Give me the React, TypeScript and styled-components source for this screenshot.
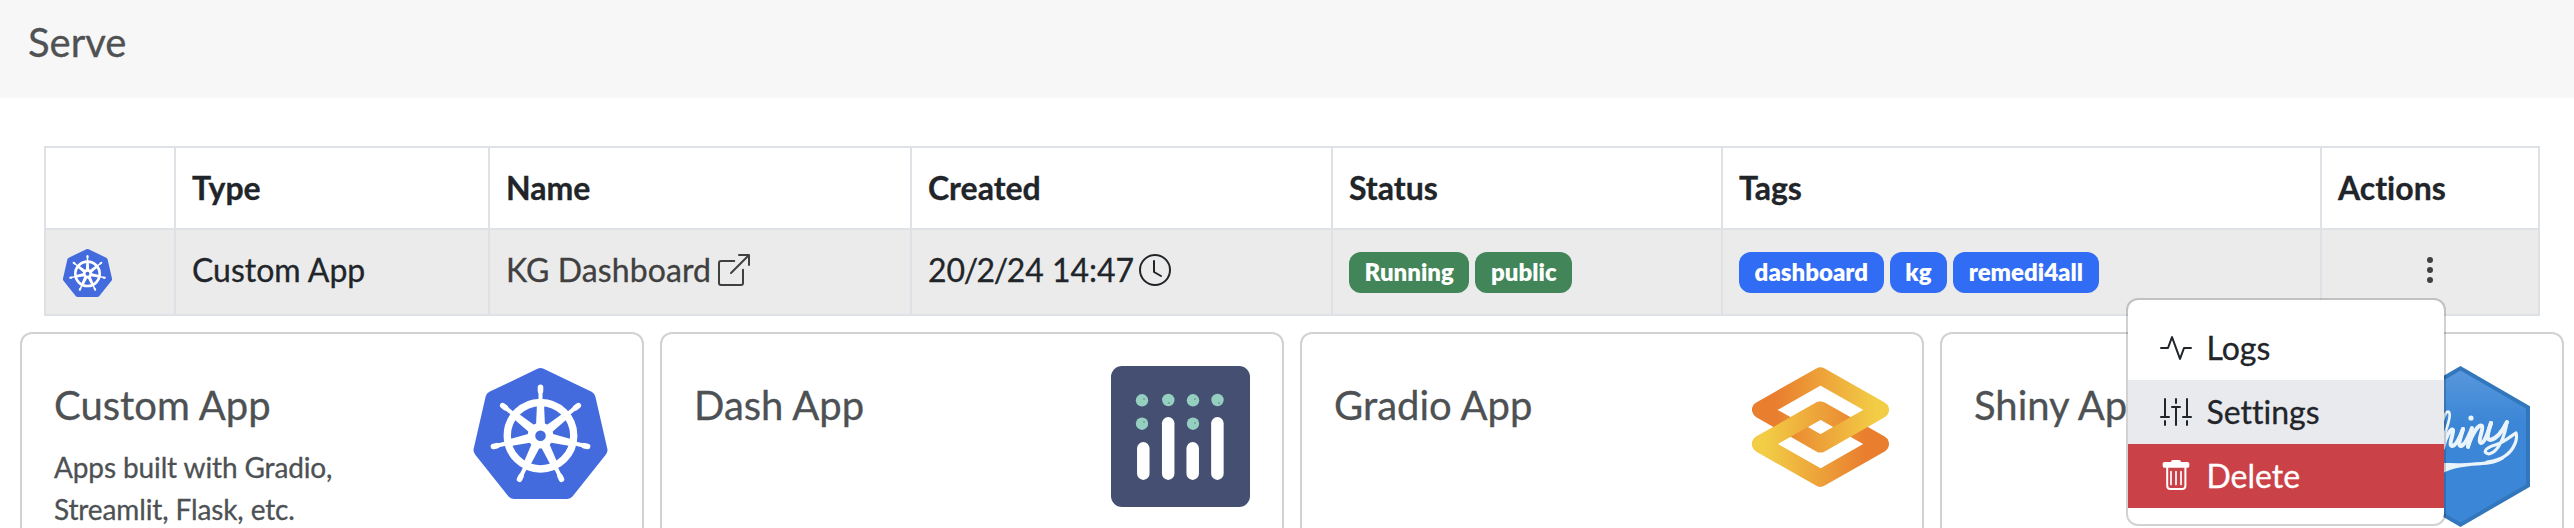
import React from 'react';
import styled, { createGlobalStyle } from 'styled-components';
import { BsBoxArrowUpRight, BsClock, BsThreeDotsVertical, BsActivity, BsSliders2Vertical } from 'react-icons/bs';

const GlobalStyle = createGlobalStyle`
  * { box-sizing: border-box; }
  html, body { height: 100%; }
  body {
    margin: 0;
    overflow: hidden;
    background: #fff;
    font-family: Lato, "Liberation Sans", sans-serif;
    font-variant-ligatures: none;
    color: #212529;
    -webkit-text-stroke: 0.3px currentColor;
  }
`;

const Page = styled.div`
  display: flex;
  flex-direction: column;
  width: 2574px;
  height: 528px;
  overflow: hidden;
`;

const Header = styled.header`
  flex: none;
  height: 98px;
  padding: 15px 28px;
  background: #f7f7f7;
`;

const PageTitle = styled.h1`
  margin: 0;
  font-size: 40px;
  line-height: 54px;
  font-weight: 400;
  color: #4f5153;
`;

const TableWrap = styled.section`
  flex: none;
  padding: 48px 34px 0 44px;
`;

const Table = styled.table`
  width: 2496px;
  border-collapse: collapse;
  table-layout: fixed;
  font-size: 32px;
  line-height: 48px;
`;

const HeadCell = styled.th`
  height: 82px;
  padding: 0 16px;
  border: 2px solid #dee2e6;
  text-align: left;
  font-weight: 700;
`;

const Cell = styled.td<{ $icon?: boolean }>`
  height: 86px;
  padding: ${p => (p.$icon ? '2px 16px 0' : '0 16px 4px')};
  border: 2px solid #dee2e6;
  background: #ebebeb;
`;

const Line = styled.div<{ $color?: string; $gap?: number }>`
  display: flex;
  align-items: center;
  gap: ${p => p.$gap ?? 6}px;
  color: ${p => p.$color || 'inherit'};
`;

const Slash = styled.span`
  margin: 0 -1.5px;
`;

const NameText = styled.span`
  letter-spacing: 0.1px;
`;

const Badge = styled.span<{ $tone: string }>`
  height: 41px;
  padding: 8.4px 15.6px;
  margin-top: 4px;
  border-radius: 12px;
  background: ${p => p.$tone};
  color: #fff;
  font-size: 24px;
  line-height: 24px;
  font-weight: 800;
  -webkit-text-stroke: 0;
`;

const MenuAnchor = styled.div`
  position: relative;
  display: flex;
  justify-content: center;
`;

const Menu = styled.div`
  position: absolute;
  top: 44px;
  right: 76px;
  z-index: 2;
  width: 320px;
  height: 228px;
  padding: 16px 0;
  border: 2px solid rgba(0, 0, 0, 0.176);
  border-radius: 12px;
  background: #fff;
  background-clip: padding-box;
`;

const MenuItem = styled.div<{ $bg?: string; $fg?: string }>`
  display: flex;
  align-items: center;
  gap: 14.5px;
  height: 64px;
  padding: 0 32px;
  background: ${p => p.$bg || 'transparent'};
  color: ${p => p.$fg || '#212529'};
`;

const Cards = styled.section`
  flex: 1;
  min-height: 0;
  display: grid;
  grid-template-columns: repeat(4, 624px);
  column-gap: 16px;
  padding: 16px 0 0 20px;
`;

const Card = styled.article`
  display: flex;
  justify-content: space-between;
  padding: 32px 32px 0;
  border: 2px solid rgba(0, 0, 0, 0.176);
  border-bottom: 0;
  border-radius: 12px 12px 0 0;
  color: #4d5154;
`;

const CardBody = styled.div`
  padding-top: 15px;
`;

const CardTitle = styled.h2`
  margin: 0 0 17px;
  font-size: 40px;
  line-height: 48px;
  font-weight: 400;
`;

const CardText = styled.p`
  width: 300px;
  margin: 0;
  font-size: 28px;
  line-height: 42px;
  letter-spacing: -0.12px;
`;

const Logo = styled.svg`
  flex: none;
  display: block;
`;

const TrashIcon = () => (
  <svg width="32" height="32" viewBox="0 0 32 32" fill="none">
    <path d="M11 2C11 .8 11.800 0 13 0h6c1.200 0 2 .8 2 2h6.500c1 0 1.800.8 1.800 1.800v2.100c0 1-.8 1.800-1.800 1.800h-23c-1 0-1.800-.8-1.800-1.800V3.800c0-1 .8-1.800 1.800-1.800z" fill="currentColor" />
    <path d="M7.200 6v19.800c0 1.900 1.300 3.200 3.200 3.200h11.800c1.900 0 3.200-1.300 3.200-3.200V6" stroke="currentColor" strokeWidth="2" />
    <path d="M11 11.700V24.500M16 11.700V24.500M21 11.700V24.500" stroke="currentColor" strokeWidth="1.700" strokeLinecap="round" />
  </svg>
);

const SPOKES = [0, 1, 2, 3, 4, 5, 6];

const point = (r: number, i: number) => {
  const a = (i * 2 * Math.PI) / 7;
  return `${(r * Math.sin(a)).toFixed(2)},${(-r * Math.cos(a)).toFixed(2)}`;
};

const KubernetesLogo = ({ width, height }: { width: number; height: number }) => (
  <Logo width={width} height={height} viewBox="-69 -70 138 134">
    <polygon points={SPOKES.map(i => point(61, i)).join(' ')} fill="#436bdd" stroke="#436bdd" strokeWidth="14" strokeLinejoin="round" />
    <g transform="translate(0 -0.8)">
      <circle r="33" fill="none" stroke="#fff" strokeWidth="7.300" />
      {SPOKES.map(i => (
        <g key={i} transform={`rotate(${(i * 360) / 7})`}>
          <path d="M-3.500-31L-4.500-9H4.500L3.500-31z" fill="#fff" />
          <path d="M0-34V-47" stroke="#fff" strokeWidth="4" strokeLinecap="round" />
          <path d="M0-44.500V-48" stroke="#fff" strokeWidth="5.500" strokeLinecap="round" />
        </g>
      ))}
      <circle r="9" fill="none" stroke="#fff" strokeWidth="7.500" />
    </g>
  </Logo>
);

const DashLogo = () => (
  <Logo width="139" height="141" viewBox="0 0 139 141">
    <rect width="139" height="141" rx="11" fill="#444f72" />
    <g fill="#94cfc0">
      {[[31, 34.3], [57.3, 34], [82, 34.3], [106.5, 34], [31, 57.7], [82, 57.7]].map(([x, y]) => (
        <circle key={`${x}-${y}`} cx={x} cy={y} r="6.200" />
      ))}
    </g>
    <g fill="#566b80">
      {[[33, 33], [58, 37], [84, 33], [108, 37], [33, 56], [84, 57]].map(([x, y]) => (
        <circle key={`${x}-${y}`} cx={x} cy={y} r="0.700" />
      ))}
    </g>
    <g stroke="#fff" strokeWidth="12.500" strokeLinecap="round">
      <path d="M32.300 82.300V107.700" />
      <path d="M57.200 57.300V107.700" />
      <path d="M81.700 82.300V107.700" />
      <path d="M106.400 57.300V107.700" />
    </g>
  </Logo>
);

const LOWER_LINK = 'M69.5 44L129.5 78L69.5 112.2L9.5 78Z';

const GradioLogo = () => (
  <Logo width="139" height="122" viewBox="0 0 139 122">
    <defs>
      <linearGradient id="warm" gradientUnits="userSpaceOnUse" x1="0" y1="0" x2="139" y2="0">
        <stop offset="0.180" stopColor="#e97e2f" />
        <stop offset="0.900" stopColor="#f2cd45" />
      </linearGradient>
      <linearGradient id="cool" gradientUnits="userSpaceOnUse" x1="0" y1="0" x2="139" y2="0">
        <stop offset="0.100" stopColor="#f2cd45" />
        <stop offset="0.820" stopColor="#e97e2f" />
      </linearGradient>
      <clipPath id="leftHalf">
        <rect width="69.500" height="122" />
      </clipPath>
    </defs>
    <g fill="none" strokeWidth="17" strokeLinejoin="round">
      <path d={LOWER_LINK} stroke="url(#cool)" />
      <path d="M69.500 9.800L129.500 43.800L69.500 78L9.500 43.800Z" stroke="url(#warm)" />
      <path d={LOWER_LINK} stroke="url(#cool)" clipPath="url(#leftHalf)" />
    </g>
  </Logo>
);

const ShinyLogo = () => (
  <Logo width="139" height="161" viewBox="0 0 139 161">
    <defs>
      <linearGradient id="sky" x1="0" y1="0" x2="0" y2="1">
        <stop offset="0" stopColor="#5797dc" />
        <stop offset="0.350" stopColor="#3b86d6" />
      </linearGradient>
    </defs>
    <path d="M69.500 0L139 40.300V120.700L69.500 161L0 120.700V40.300Z" fill="#3276bb" />
    <path d="M69.500 4.600L135 42.600V118.400L69.500 156.400L4 118.400V42.600Z" fill="url(#sky)" />
    <g fill="none" stroke="#ebf4fb" strokeLinecap="round" strokeLinejoin="round">
      <path d="M48 82C54 68 61 50 58 46C54 43 49 60 48 80" strokeWidth="2.800" />
      <path d="M52 82C54 72 60 61 62 64C63 67 57 79 61 80C65 80 69 71 72 63" strokeWidth="4" />
      <path d="M72 63C70 71 66 80 70 80C74 79 78 70 81 62L77 81" strokeWidth="4" />
      <path d="M77 80C81 68 88 57 91 60C93 63 86 75 90 77C94 77 97 66 100 57" strokeWidth="4" />
      <path d="M100 57C97 66 95 74 99 74C106 73 112 64 116 56" strokeWidth="4" />
      <path d="M116 56C114 69 108 86 98 88C91 87 94 82 104 79C114 76 121 69 125 67C127 73 123 84 114 90C109 94 103 95 96 96" strokeWidth="3.200" />
    </g>
    <circle cx="80" cy="52" r="2.600" fill="#ebf4fb" />
    <path d="M110 91C102 96 88 96 75 97C66 97.500 58 97 50 97V108C62 101 78 100 92 99C102 98.500 108 96 113 93z" fill="#ebf4fb" />
  </Logo>
);

const COLUMNS = [130, 314, 422, 421, 390, 599, 218];

const TITLES = ['', 'Type', 'Name', 'Created', 'Status', 'Tags', 'Actions'];

export default function App() {
  return (
    <Page>
      <GlobalStyle />
      <Header>
        <PageTitle>Serve</PageTitle>
      </Header>
      <TableWrap>
        <Table>
          <colgroup>
            {COLUMNS.map((w, i) => (
              <col key={i} width={w} />
            ))}
          </colgroup>
          <thead>
            <tr>
              {TITLES.map(t => (
                <HeadCell key={t}>{t}</HeadCell>
              ))}
            </tr>
          </thead>
          <tbody>
            <tr>
              <Cell $icon><KubernetesLogo width={51} height={50} /></Cell>
              <Cell>Custom App</Cell>
              <Cell>
                <Line $color="#404040" $gap={7}>
                  <NameText>KG Dashboard</NameText>
                  <BsBoxArrowUpRight size={32} />
                </Line>
              </Cell>
              <Cell>
                <Line $gap={5}>
                  <span>20<Slash>/</Slash>2<Slash>/</Slash>24 14:47</span>
                  <BsClock size={32} />
                </Line>
              </Cell>
              <Cell>
                <Line>
                  <Badge $tone="#418558">Running</Badge>
                  <Badge $tone="#418558">public</Badge>
                </Line>
              </Cell>
              <Cell>
                <Line>
                  <Badge $tone="#316cf4">dashboard</Badge>
                  <Badge $tone="#316cf4">kg</Badge>
                  <Badge $tone="#316cf4">remedi4all</Badge>
                </Line>
              </Cell>
              <Cell>
                <MenuAnchor>
                  <BsThreeDotsVertical size={32} color="#404040" />
                  <Menu>
                    <MenuItem><BsActivity size={32} />Logs</MenuItem>
                    <MenuItem $bg="#e9eaee"><BsSliders2Vertical size={32} />Settings</MenuItem>
                    <MenuItem $bg="#ca4248" $fg="#fff"><TrashIcon />Delete</MenuItem>
                  </Menu>
                </MenuAnchor>
              </Cell>
            </tr>
          </tbody>
        </Table>
      </TableWrap>
      <Cards>
        <Card>
          <CardBody>
            <CardTitle>Custom App</CardTitle>
            <CardText>Apps built with Gradio, Streamlit, Flask, etc.</CardText>
          </CardBody>
          <KubernetesLogo width={139} height={135} />
        </Card>
        <Card>
          <CardBody><CardTitle>Dash App</CardTitle></CardBody>
          <DashLogo />
        </Card>
        <Card>
          <CardBody><CardTitle>Gradio App</CardTitle></CardBody>
          <GradioLogo />
        </Card>
        <Card>
          <CardBody><CardTitle>Shiny App</CardTitle></CardBody>
          <ShinyLogo />
        </Card>
      </Cards>
    </Page>
  );
}
